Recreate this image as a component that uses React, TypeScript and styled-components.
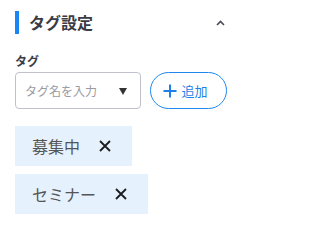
import styled, {createGlobalStyle} from 'styled-components'

const GlobalStyle = createGlobalStyle`
  body {
    margin: 0;
    background: #fff;
    font-family: "Noto Sans CJK JP", "Noto Sans", sans-serif;
  }
`

const Panel = styled.section`
  width: 249px;
  height: 237px;
  box-sizing: border-box;
  padding: 11px 22px 0 15px;
`

const Header = styled.div`
  display: flex;
  align-items: center;
  height: 23px;
`

const AccentBar = styled.span`
  width: 4px;
  height: 23px;
  background: #1a86f5;
  margin-right: 10px;
`

const Title = styled.h2`
  flex: 1;
  margin: 0;
  font-size: 16px;
  font-weight: 700;
  color: #3b3b46;
  line-height: 23px;
`

const Toggle = styled.button`
  display: flex;
  align-items: center;
  justify-content: center;
  width: 14px;
  height: 14px;
  padding: 0;
  border: none;
  background: none;
  color: #4a4a55;
`

const FieldLabel = styled.div`
  margin-top: 19px;
  font-size: 12px;
  font-weight: 700;
  line-height: 16px;
  color: #3b3b46;
`

const InputRow = styled.div`
  display: flex;
  align-items: center;
  gap: 9px;
  margin-top: 3px;
`

const SelectBox = styled.div`
  display: flex;
  align-items: center;
  justify-content: space-between;
  box-sizing: border-box;
  width: 128px;
  height: 37px;
  padding: 0 13px 0 9px;
  border: 1px solid #bfc2cc;
  border-radius: 4px;
`

const Placeholder = styled.span`
  font-size: 12px;
  color: #9a9aa2;
`

const Caret = styled.span`
  width: 0;
  height: 0;
  margin-top: 2px;
  border-left: 4px solid transparent;
  border-right: 4px solid transparent;
  border-top: 7px solid #333;
`

const AddButton = styled.button`
  display: flex;
  align-items: center;
  gap: 5px;
  box-sizing: border-box;
  width: 79px;
  height: 37px;
  padding: 0 0 0 12px;
  border: 1px solid #1e88f0;
  border-radius: 19px;
  background: #fff;
  color: #1e7fe8;
  font-family: inherit;
  font-size: 13px;
`

const TagList = styled.div`
  display: flex;
  flex-direction: column;
  align-items: flex-start;
  gap: 8px;
  margin-top: 17px;
`

const Tag = styled.div`
  display: flex;
  align-items: center;
  gap: 19px;
  height: 40px;
  padding: 0 21px 0 17px;
  background: #e5f2fe;
  font-size: 16px;
  color: #555;
`

const RemoveButton = styled.button`
  display: flex;
  padding: 0;
  border: none;
  background: none;
  color: #1c1c1c;
`

const tags = ['募集中', 'セミナー']

export default function App() {
  return (
    <Panel>
      <GlobalStyle />
      <Header>
        <AccentBar />
        <Title>タグ設定</Title>
        <Toggle aria-label="折りたたむ">
          <svg width="9" height="6" viewBox="0 0 9 6">
            <path d="M1 5 L4.5 1.5 L8 5" fill="none" stroke="currentColor" strokeWidth="1.6" />
          </svg>
        </Toggle>
      </Header>
      <FieldLabel>タグ</FieldLabel>
      <InputRow>
        <SelectBox>
          <Placeholder>タグ名を入力</Placeholder>
          <Caret />
        </SelectBox>
        <AddButton>
          <svg width="14" height="14" viewBox="0 0 14 14">
            <path d="M7 0.5 V13.5 M0.5 7 H13.5" stroke="currentColor" strokeWidth="2" />
          </svg>
          追加
        </AddButton>
      </InputRow>
      <TagList>
        {tags.map(t => (
          <Tag key={t}>
            {t}
            <RemoveButton aria-label="削除">
              <svg width="12" height="12" viewBox="0 0 12 12">
                <path d="M1 1 L11 11 M11 1 L1 11" stroke="currentColor" strokeWidth="1.8" />
              </svg>
            </RemoveButton>
          </Tag>
        ))}
      </TagList>
    </Panel>
  )
}
